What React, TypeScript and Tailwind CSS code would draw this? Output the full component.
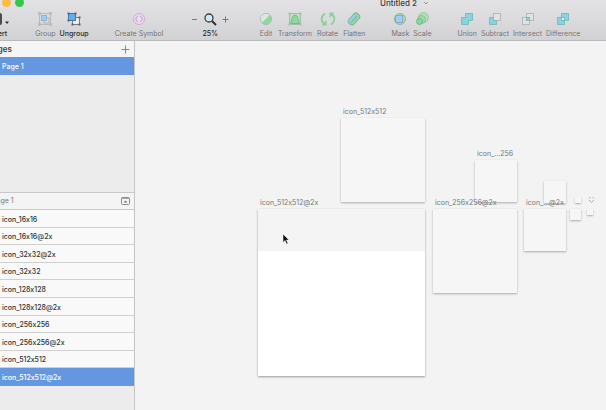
import type { ReactNode } from "react";

const layers = [
  "icon_16x16",
  "icon_16x16@2x",
  "icon_32x32@2x",
  "icon_32x32",
  "icon_128x128",
  "icon_128x128@2x",
  "icon_256x256",
  "icon_256x256@2x",
  "icon_512x512",
  "icon_512x512@2x",
];

const artboards = [
  { id: 1, label: "icon_512x512", box: "left-[206px] top-[77px] size-[84px]" },
  { id: 2, label: "icon_...256", box: "left-[340px] top-[119px] size-[42px]" },
  { id: 3, label: "", box: "left-[409px] top-[140px] size-[22px]" },
  { id: 4, label: "", box: "left-[440px] top-[156px] size-[6px]" },
  { id: 5, label: "icon_256x256@2x", box: "left-[298px] top-[168px] size-[84px]" },
  { id: 6, label: "icon_...@2x", box: "left-[389px] top-[168px] size-[42px]" },
  { id: 7, label: "", box: "left-[435px] top-[168px] size-[11px]" },
  { id: 8, label: "", box: "left-[452px] top-[168px] size-[6px]" },
];

type ToolProps = {
  label: string;
  active?: boolean;
  children: ReactNode;
};

const Tool = ({ label, active, children }: ToolProps) => {
  return (
    <button
      type="button"
      className={
        active
          ? "flex flex-col items-center gap-[3px] font-medium text-[#2c2b2d]"
          : "flex flex-col items-center gap-[3px] text-[#777578]"
      }
    >
      <svg className="overflow-visible" width="14" height="14" viewBox="0 0 14 14" fill="none">
        {children}
      </svg>
      <span className="text-[7px] leading-[10px] whitespace-nowrap">{label}</span>
    </button>
  );
};

const Toolbar = () => {
  return (
    <header className="shrink-0 overflow-hidden border-b border-[#b9b8ba] bg-linear-to-b from-[#e3e2e4] to-[#d2d1d3]">
      <div className="flex h-[5px] items-center">
        <span className="ml-0.5 size-[9px] shrink-0 rounded-full bg-[#fdbc40]" />
        <span className="ml-1 size-[9px] shrink-0 rounded-full bg-[#34c84a]" />
        <h1 className="ml-[356px] text-[8px] leading-[10px] font-medium whitespace-nowrap text-[#3d3c3e]">
          Untitled 2
        </h1>
        <svg className="ml-1.5 shrink-0" width="6" height="4" viewBox="0 0 6 4" fill="none">
          <path d="M1 1l2 2 2-2" stroke="#97969a" />
        </svg>
      </div>

      <div className="-ml-3 flex gap-[26px] pt-[7px] pb-px">
        <Tool label="Insert" active>
          <rect x="-1" y="1" width="12" height="12" rx="2" fill="#4b4a4d" />
          <path d="M5 4v6M2 7h6" stroke="#fff" />
          <path d="M14 9.5h4l-2 2.5z" fill="#2c2b2d" />
        </Tool>

        <div className="ml-0.5 flex gap-1">
          <Tool label="Group">
            <rect x="1.5" y="1.5" width="11" height="11" stroke="#b9b8bb" />
            <rect x="6" y="6" width="5" height="5" fill="#dcdcde" stroke="#b5b5b8" />
            <rect x="3.5" y="3.5" width="5" height="5" fill="#9fd0f0" stroke="#8fb4cd" />
            <path d="M0 0h3v3H0zM11 0h3v3h-3zM0 11h3v3H0zM11 11h3v3h-3z" fill="#bdbcbf" />
          </Tool>
          <Tool label="Ungroup" active>
            <rect x="5.5" y="5.5" width="7" height="7" fill="#ededee" stroke="#7c7b7e" />
            <rect x="1.5" y="1.5" width="7" height="7" fill="#5cb0f2" stroke="#47799f" />
            <path d="M0.5 0.5h2v2h-2zM7.5 0.5h2v2h-2zM0.5 7.5h2v2h-2zM11.5 4.5h2v2h-2zM4.5 11.5h2v2h-2zM11.5 11.5h2v2h-2z" fill="#626164" />
          </Tool>
        </div>

        <Tool label="Create Symbol">
          <circle cx="7" cy="7" r="5.5" fill="#e9dcec" stroke="#d3a9d9" />
          <path d="M6 4.2C4.5 4.5 4 5.5 4 7s0.5 2.5 2 2.8M8 4.2C9.5 4.5 10 5.5 10 7s-0.5 2.5-2 2.8" stroke="#cb98d3" />
        </Tool>

        <div className="mx-0.5 flex items-start gap-1">
          <button type="button" aria-label="Zoom out" className="pt-1">
            <svg width="7" height="7" viewBox="0 0 7 7">
              <path d="M1 3.5h5" stroke="#78777a" />
            </svg>
          </button>
          <Tool label="25%" active>
            <circle cx="6" cy="6" r="4" fill="#cfe9f5" stroke="#3d3c3f" strokeWidth="1.3" />
            <path d="M9 9l4 4" stroke="#2f2e31" strokeWidth="2" />
          </Tool>
          <button type="button" aria-label="Zoom in" className="pt-1">
            <svg width="7" height="7" viewBox="0 0 7 7">
              <path d="M0.5 3.5h6M3.5 0.5v6" stroke="#78777a" />
            </svg>
          </button>
        </div>

        <div className="ml-0.5 flex gap-[5px]">
          <Tool label="Edit">
            <circle cx="7" cy="7" r="5.5" fill="#8fd9a1" stroke="#a3c3a8" />
            <path d="M3.2 10.5A5 5 0 0 1 10.5 3.2z" fill="#dfe5e0" />
          </Tool>
          <Tool label="Transform">
            <rect x="1.5" y="1.5" width="11" height="11" fill="#bfdcc6" stroke="#a6bfab" />
            <path d="M4.5 5.5C4.5 2.5 9.5 2.5 9.5 5.5l2 6h-9z" fill="#8fd9a1" stroke="#78b988" />
            <path d="M0.5 0.5h2v2h-2zM11.5 0.5h2v2h-2zM0.5 11.5h2v2h-2zM11.5 11.5h2v2h-2z" fill="#a9bdad" />
          </Tool>
          <Tool label="Rotate">
            <path d="M4 1.5C0 4-0.5 9 3 11.5M10 12.5c4-2.5 4.5-7.5 1-10" stroke="#8bcf9c" strokeWidth="1.8" />
            <path d="M5.5 8v5.5H0.5zM8.5 6V0.5h5z" fill="#8bcf9c" />
          </Tool>
          <Tool label="Flatten">
            <rect x="0.5" y="3.5" width="13" height="7" rx="3" transform="rotate(-48 7 7)" fill="#8fd9a1" stroke="#83b59a" />
            <rect x="1" y="4" width="10" height="3.5" rx="1.7" transform="rotate(-48 7 7)" fill="#93cfe6" />
            <path d="M4 10.5l6-6.5" stroke="#77ad9b" />
          </Tool>
        </div>

        <div className="flex gap-1">
          <Tool label="Mask">
            <circle cx="7" cy="7" r="5.5" fill="#a6dab2" stroke="#8db998" />
            <rect x="2.5" y="3.5" width="7" height="7" fill="#a3cdf0" stroke="#85abcf" />
          </Tool>
          <Tool label="Scale">
            <circle cx="8.5" cy="5.5" r="5" fill="#b1dfba" stroke="#9acba5" />
            <circle cx="6.5" cy="7.5" r="4" fill="#a0dbad" stroke="#88c395" />
            <circle cx="4.5" cy="9.5" r="3" fill="#8ad79c" stroke="#76b386" />
          </Tool>
        </div>

        <div className="flex gap-1">
          <Tool label="Union">
            <path d="M5.5 1.5h7v7h-4v4h-7v-7h4z" fill="#8bd3dc" stroke="#7dbac2" />
          </Tool>
          <Tool label="Subtract">
            <rect x="5.5" y="1.5" width="7" height="7" fill="#e2e2e3" stroke="#b7b6b9" />
            <path d="M1.5 5.5h4v3h3v4h-7z" fill="#8bd3dc" stroke="#7dbac2" />
          </Tool>
          <Tool label="Intersect">
            <rect x="5.5" y="1.5" width="7" height="7" fill="#e2e2e3" stroke="#b7b6b9" />
            <rect x="1.5" y="5.5" width="7" height="7" fill="#e2e2e3" stroke="#b7b6b9" />
            <rect x="5.5" y="5.5" width="3" height="3" fill="#8bd3dc" stroke="#7dbac2" />
          </Tool>
          <Tool label="Difference">
            <path d="M5.5 1.5h7v7h-4v4h-7v-7h4z" fill="#8bd3dc" stroke="#7dbac2" />
            <rect x="5.5" y="5.5" width="3" height="3" fill="#ececed" stroke="#7dbac2" />
          </Tool>
        </div>
      </div>
    </header>
  );
};

const Sidebar = () => {
  return (
    <aside className="flex w-[135px] shrink-0 flex-col overflow-hidden border-r border-[#c4c4c4] bg-[#ececec]">
      <section className="h-[152px] border-b border-[#c8c8c8]">
        <div className="flex h-4 items-center justify-between bg-[#f5f5f5] pr-1">
          <h2 className="-ml-3 text-[8px] font-semibold text-[#414141]">Pages</h2>
          <button type="button" aria-label="Add page">
            <svg width="9" height="9" viewBox="0 0 9 9">
              <path d="M0.5 4.5h8M4.5 0.5v8" stroke="#888" />
            </svg>
          </button>
        </div>
        <button
          type="button"
          className="flex h-[18px] w-full items-center bg-[#6497e0] pt-[3px] pl-0.5 text-[7px] font-medium text-white"
        >
          Page 1
        </button>
      </section>

      <div className="flex h-[17px] items-center justify-between border-b border-[#cacaca] bg-[#f4f4f4] pr-1">
        <h2 className="-ml-2 text-[7px] text-[#777]">Page 1</h2>
        <button type="button" aria-label="Collapse layers">
          <svg width="9" height="8" viewBox="0 0 9 8" fill="none">
            <rect x="0.5" y="0.5" width="8" height="7" rx="1" stroke="#8b8b8b" />
            <path d="M1 1.5h7" stroke="#a5a5a5" />
            <path d="M2.5 5.5h4l-2-2z" fill="#777" />
          </svg>
        </button>
      </div>

      <ul className="grid h-44 grid-rows-10 text-[7px] font-medium">
        {layers.map((name) => (
          <li
            key={name}
            className={
              name === "icon_512x512@2x"
                ? "flex items-center bg-[#6497e0] pt-0.5 pl-0.5 text-white"
                : "flex items-center border-b border-[#d0d0d0] bg-[#f9f9f9] pt-[3px] pl-0.5 text-[#333]"
            }
          >
            {name}
          </li>
        ))}
      </ul>
    </aside>
  );
};

const Canvas = () => {
  return (
    <main className="relative flex-1 overflow-hidden bg-[#f3f3f3]">
      <div className="absolute top-[168px] left-[123px] size-[167px] bg-linear-to-b from-[#f4f4f4] from-25% to-white to-25% shadow-[0_1px_2px_#999]">
        <span className="absolute -top-[11px] left-0.5 text-[7px] leading-[10px] text-[#777]">
          icon_512x512@2x
        </span>
      </div>

      {artboards.map((board) => (
        <div
          key={board.id}
          className={`absolute bg-[#f6f6f6] shadow-[0_1px_2px_#aaa] ${board.box}`}
        >
          {board.label && (
            <span className="absolute -top-[11px] left-0.5 text-[7px] leading-[10px] whitespace-nowrap text-[#777]">
              {board.label}
            </span>
          )}
        </div>
      ))}

      <svg className="absolute top-[155px] left-[453px]" width="7" height="7" viewBox="0 0 7 7" fill="none">
        <path d="M1 2.5L2.5 1M4.5 1L6 2.5M6 4L3.5 6.5L1 4" stroke="#aaa" />
      </svg>

      <svg className="absolute top-[192px] left-[147px]" width="8" height="12" viewBox="0 0 8 12">
        <path d="M1 1v8.5l2-2 1.5 3.5 1.5-.6L4.5 7H7z" fill="#111" stroke="#fff" strokeWidth="0.5" />
      </svg>
    </main>
  );
};

const App = () => {
  return (
    <div className="flex min-h-screen flex-col font-[Inter,sans-serif] [font-feature-settings:'calt'_0]">
      <Toolbar />
      <div className="flex flex-1">
        <Sidebar />
        <Canvas />
      </div>
    </div>
  );
};

export default App;
